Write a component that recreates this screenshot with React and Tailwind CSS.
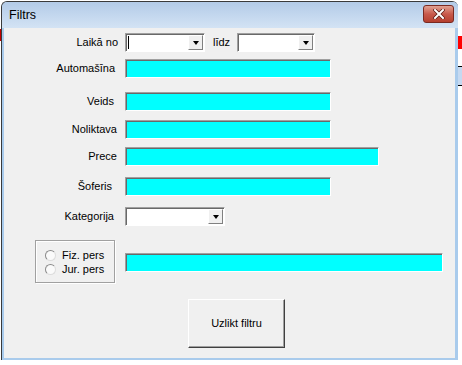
import React from 'react';

const sunken = 'border border-t-[#a0a0a0] border-l-[#a0a0a0] border-r-white border-b-white shadow-[inset_1px_1px_0_#696969]';

function DropBtn() {
  return (
    <div className="w-[15px] h-full flex items-center justify-center bg-[#f0f0f0] border border-t-white border-l-white border-r-[#808080] border-b-[#808080]">
      <div className="w-0 h-0 border-l-[3.5px] border-r-[3.5px] border-t-[4px] border-l-transparent border-r-transparent border-t-black" />
    </div>
  );
}

function Combo({ width, caret }) {
  return (
    <div className={`${width} h-[19px] bg-white flex items-stretch ${sunken}`}>
      <div className="flex-1 flex items-center pl-[2px]">
        {caret && <div className="w-px h-[13px] bg-black" />}
      </div>
      <div className="py-[1px] pr-[1px]"><DropBtn /></div>
    </div>
  );
}

function Field({ width }) {
  return <div className={`${width} h-[19px] bg-[#00ffff] ${sunken}`} />;
}

function Row({ label, pr, mt, children }) {
  return (
    <div className={`flex items-center h-[19px] ${mt}`}>
      <div className={`w-[121px] text-right ${pr}`}>{label}</div>
      {children}
    </div>
  );
}

function Radio({ label }) {
  return (
    <div className="flex items-center h-[14px]">
      <div className="w-[11px] h-[11px] rounded-full bg-[#fafafa] border border-t-[#8a8a8a] border-l-[#8a8a8a] border-r-[#dcdcdc] border-b-[#dcdcdc]" />
      <span className="ml-[6px]">{label}</span>
    </div>
  );
}

export default function App() {
  return (
    <div className="relative w-[462px] h-[365px] bg-white overflow-hidden text-[11px] text-black" style={{ fontFamily: '"Liberation Sans", Arial, sans-serif' }}>
      {/* sheet behind the dialog */}
      <div className="absolute left-[458px] top-[36px] w-[4px] h-[13px] bg-[#ff0000]" />
      <div className="absolute left-[458px] top-[66px] w-[4px] h-[20px] bg-[#c5d9f1] border-y border-black" />
      <div className="absolute left-0 top-[29px] w-[1px] h-[12px] bg-[#c00000]" />

      <div className="ml-[1px] mt-[1px] w-[457px] h-[359px] rounded-t-[6px] border-t border-l border-[#3a3a3a] bg-[#a9cbec] flex flex-col">
        {/* title bar */}
        <div className="h-[26px] rounded-t-[5px] bg-gradient-to-b from-[#b3cbe7] to-[#d3e3f4] flex items-start justify-between">
          <span className="ml-[7px] mt-[6px] text-[12.5px] leading-[15px]">Filtrs</span>
          <div className="mt-[3px] mr-[4px] w-[31px] h-[18px] rounded-[3px] border border-[#7a2a22] bg-gradient-to-b from-[#e0a193] via-[#c8594b] to-[#b5402f] flex items-center justify-center">
            <svg width="12" height="10" viewBox="0 0 12 10">
              <path d="M2 1 L10 9 M10 1 L2 9" stroke="#5a1a12" strokeWidth="3.4" strokeLinecap="square" />
              <path d="M2 1 L10 9 M10 1 L2 9" stroke="#ffffff" strokeWidth="2" strokeLinecap="square" />
            </svg>
          </div>
        </div>

        {/* client area */}
        <div className="ml-[2px] mr-[3px] w-[451px] h-[330px] bg-[#f0f0f0] flex flex-col">
          <Row label="Laikā no" pr="pr-[7px]" mt="mt-[5px]">
            <Combo width="w-[80px]" caret />
            <span className="ml-[8px] mr-[7px]">līdz</span>
            <Combo width="w-[78px]" />
          </Row>
          <Row label="Automašīna" pr="pr-[10px]" mt="mt-[7px]">
            <Field width="w-[206px]" />
          </Row>
          <Row label="Veids" pr="pr-[11px]" mt="mt-[14px]">
            <Field width="w-[206px]" />
          </Row>
          <Row label="Noliktava" pr="pr-[8px]" mt="mt-[9px]">
            <Field width="w-[206px]" />
          </Row>
          <Row label="Prece" pr="pr-[8px]" mt="mt-[8px]">
            <Field width="w-[254px]" />
          </Row>
          <Row label="Šoferis" pr="pr-[13px]" mt="mt-[11px]">
            <Field width="w-[206px]" />
          </Row>
          <Row label="Kategorija" pr="pr-[11px]" mt="mt-[11px]">
            <Combo width="w-[100px]" />
          </Row>

          <div className="flex items-start mt-[14px]">
            <div className="ml-[31px] w-[80px] h-[43px] border border-[#a0a0a0] shadow-[inset_1px_1px_0_#ffffff,1px_1px_0_#ffffff] pl-[9px] pt-[7px]">
              <Radio label="Fiz. pers" />
              <Radio label="Jur. pers" />
            </div>
            <div className="ml-[10px] mt-[13px]">
              <Field width="w-[318px]" />
            </div>
          </div>

          <div className="mt-[16px] ml-[184px] w-[97px] h-[49px] flex items-center justify-center bg-[#f0f0f0] border border-t-white border-l-white border-r-[#404040] border-b-[#404040] shadow-[inset_-1px_-1px_0_#a0a0a0]">
            Uzlikt filtru
          </div>
        </div>
      </div>
    </div>
  );
}
